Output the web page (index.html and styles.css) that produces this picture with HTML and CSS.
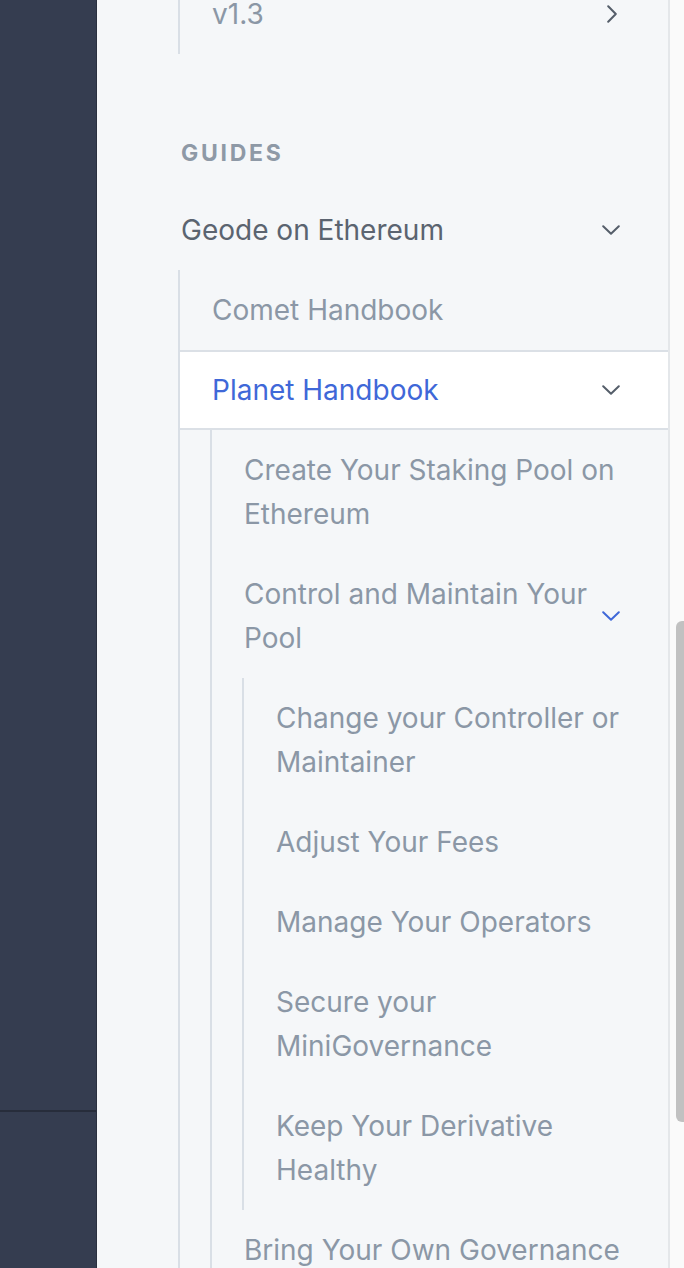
FILE: index.html
```html
<!DOCTYPE html>
<html lang="en">
<head>
<meta charset="utf-8">
<title>Guides</title>
<link rel="stylesheet" href="styles.css">
</head>
<body>
<div class="page">
  <aside class="rail"><div class="rail-top"></div></aside>
  <nav class="sidebar">
    <ul class="tree first">
      <li>
        <a class="row"><span class="label">v1.3</span>
          <svg class="chev-right" width="10" height="18" viewBox="0 0 10 18"><path d="M1.2 1.2 8.8 9 1.2 16.8" fill="none" stroke="currentColor" stroke-width="2" stroke-linecap="round" stroke-linejoin="round"/></svg>
        </a>
      </li>
    </ul>
    <div class="section-title">GUIDES</div>
    <a class="row group"><span class="label">Geode on Ethereum</span>
      <svg class="chev-down" width="18" height="10" viewBox="0 0 18 10"><path d="M1.2 1.2 9 8.8 16.8 1.2" fill="none" stroke="currentColor" stroke-width="2" stroke-linecap="round" stroke-linejoin="round"/></svg>
    </a>
    <ul class="tree">
      <li><a class="row"><span class="label">Comet Handbook</span></a></li>
      <li>
        <a class="row active"><span class="label">Planet Handbook</span>
          <svg class="chev-down" width="18" height="10" viewBox="0 0 18 10"><path d="M1.2 1.2 9 8.8 16.8 1.2" fill="none" stroke="currentColor" stroke-width="2" stroke-linecap="round" stroke-linejoin="round"/></svg>
        </a>
        <ul class="tree">
          <li><a class="row"><span class="label">Create Your Staking Pool on Ethereum</span></a></li>
          <li>
            <a class="row"><span class="label">Control and Maintain Your Pool</span>
              <svg class="chev-down blue" width="18" height="10" viewBox="0 0 18 10"><path d="M1.2 1.2 9 8.8 16.8 1.2" fill="none" stroke="currentColor" stroke-width="2" stroke-linecap="round" stroke-linejoin="round"/></svg>
            </a>
            <ul class="tree">
              <li><a class="row"><span class="label">Change your Controller or Maintainer</span></a></li>
              <li><a class="row"><span class="label">Adjust Your Fees</span></a></li>
              <li><a class="row"><span class="label">Manage Your Operators</span></a></li>
              <li><a class="row"><span class="label">Secure your MiniGovernance</span></a></li>
              <li><a class="row"><span class="label">Keep Your Derivative Healthy</span></a></li>
            </ul>
          </li>
          <li><a class="row"><span class="label">Bring Your Own Governance</span></a></li>
        </ul>
      </li>
    </ul>
  </nav>
  <div class="scrollbar"><div class="thumb"></div></div>
</div>
</body>
</html>
```

FILE: styles.css
```css
* { box-sizing: border-box; }
html, body { margin: 0; padding: 0; }
body {
  width: 684px;
  height: 1268px;
  overflow: hidden;
  font-family: Inter, "Noto Sans", "Liberation Sans", sans-serif;
  background: #f5f7f9;
}
.page {
  display: flex;
  height: 1268px;
  overflow: hidden;
}
.rail {
  width: 97px;
  flex: none;
  background: #353d50;
  border-right: 1px solid #2a303f;
}
.rail-top {
  height: 1112px;
  border-bottom: 2px solid #272d3b;
}
.sidebar {
  flex: 1;
  min-width: 0;
  background: #f5f7f9;
  border-right: 2px solid #e4e7ea;
  padding-left: 81px;
}
.tree {
  list-style: none;
  margin: 0;
  padding: 0;
  border-left: 2px solid #d9dfe6;
}
.tree .tree { margin-left: 30px; }
.tree.first { margin-top: -26px; }
.row {
  display: flex;
  align-items: center;
  justify-content: space-between;
  gap: 8px;
  padding: 18px 40px 18px 32px;
  font-size: 28px;
  line-height: 44px;
  color: #8b97a6;
  text-decoration: none;
}
.row .label { flex: 1; min-width: 0; }
.row svg { flex: none; color: #555e6a; margin-right: 8px; }
.row svg.chev-right { margin-right: 11px; }
.row svg.blue { color: #3f68d8; }
.row.active {
  background: #ffffff;
  border-top: 2px solid #dbe0e6;
  border-bottom: 2px solid #dbe0e6;
  padding-top: 16px;
  padding-bottom: 16px;
  color: #3f68d8;
}
.row.group {
  padding-left: 3px;
  color: #5b6470;
}
.section-title {
  margin: 81px 0 19px 0;
  padding-left: 3px;
  font-size: 23px;
  line-height: 36px;
  font-weight: 700;
  letter-spacing: 2.7px;
  color: #8e99a6;
}
.scrollbar {
  width: 14px;
  flex: none;
  background: #fafafa;
  padding-top: 621px;
  padding-left: 6px;
  overflow: hidden;
}
.thumb {
  width: 14px;
  height: 501px;
  background: #c1c1c1;
  border-radius: 6px;
}
```
